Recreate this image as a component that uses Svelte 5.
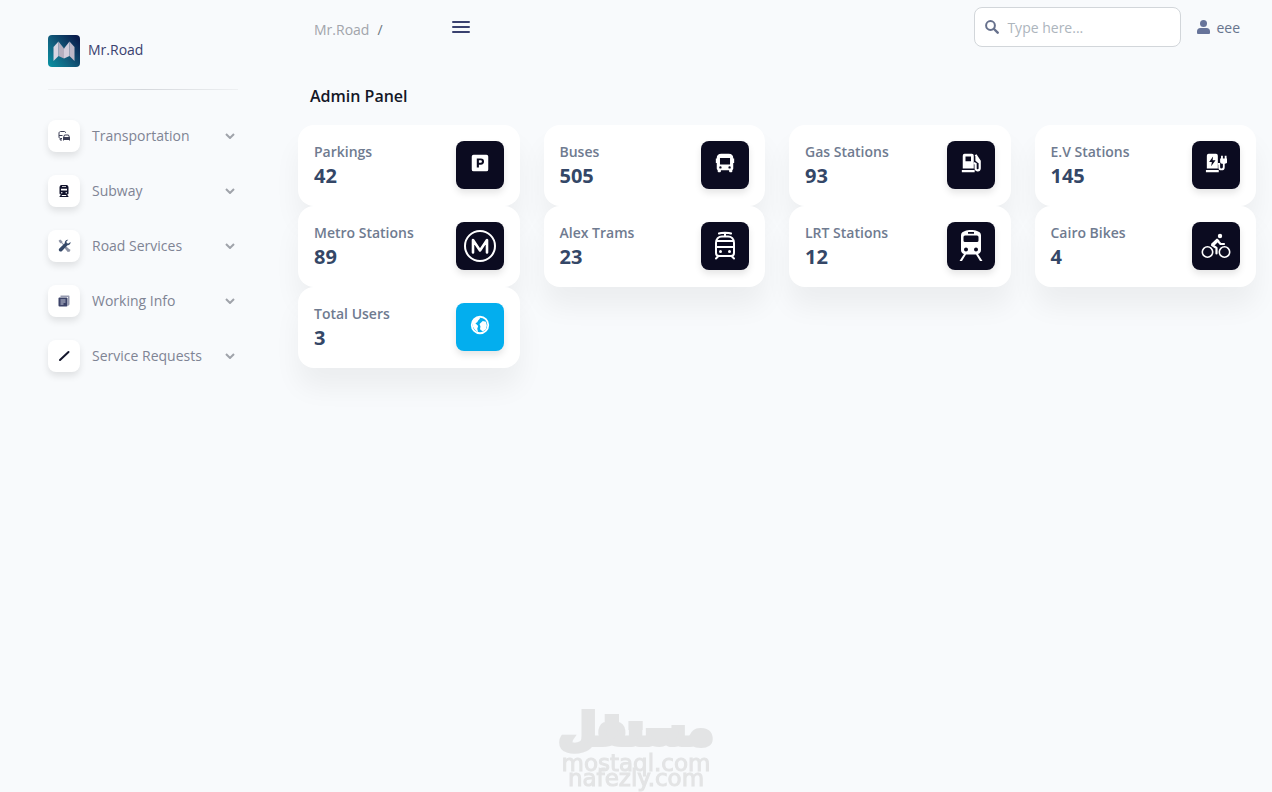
<script lang="ts">
  type Stat = { label: string; value: number; icon: string; accent?: boolean };

  const nav = [
    { label: 'Transportation', icon: 'commute' },
    { label: 'Subway', icon: 'subway' },
    { label: 'Road Services', icon: 'tools' },
    { label: 'Working Info', icon: 'news' },
    { label: 'Service Requests', icon: 'pen' }
  ];

  const stats: Stat[] = [
    { label: 'Parkings', value: 42, icon: 'parking' },
    { label: 'Buses', value: 505, icon: 'bus' },
    { label: 'Gas Stations', value: 93, icon: 'gas' },
    { label: 'E.V Stations', value: 145, icon: 'ev' },
    { label: 'Metro Stations', value: 89, icon: 'metro' },
    { label: 'Alex Trams', value: 23, icon: 'tram' },
    { label: 'LRT Stations', value: 12, icon: 'lrt' },
    { label: 'Cairo Bikes', value: 4, icon: 'bike' },
    { label: 'Total Users', value: 3, icon: 'globe', accent: true }
  ];

  // these fill the tile, the rest are drawn as small glyphs
  const large = ['metro', 'tram', 'lrt', 'bike'];

  let open = $state('');
  let query = $state('');
</script>

<div class="layout">
  <aside>
    <a class="brand" href="#home">
      <svg width="32" height="32" viewBox="0 0 32 32" aria-hidden="true">
        <defs>
          <linearGradient id="logo" x1="0" y1="1" x2="1" y2="0.2">
            <stop offset="0" stop-color="#0894a4" />
            <stop offset="0.45" stop-color="#12607f" />
            <stop offset="1" stop-color="#0a1d4c" />
          </linearGradient>
        </defs>
        <rect width="32" height="32" rx="4" fill="url(#logo)" />
        <path fill="#d8d5e2" d="M5.500 12l5-5.500v14.500l-5 5z" />
        <path fill="#b5afbf" d="M10.500 6.500l5.500 7v10l-5.500-2.500z" />
        <path fill="#d2cddb" d="M16 13.500l5.500-7v14.500L16 23.500z" />
        <path fill="#bdb7c7" d="M21.500 6.500l5 5.500v14l-5-5z" />
      </svg>
      <span>Mr.Road</span>
    </a>
    <hr />
    <nav aria-label="Main">
      {#each nav as item (item.label)}
        <button
          class="nav-item"
          aria-expanded={open === item.label}
          onclick={() => (open = open === item.label ? '' : item.label)}
        >
          <span class="nav-icon">
            {#if item.icon === 'commute'}
              <svg width="12" height="12" viewBox="0 0 24 24" fill="none" stroke="#3a3d55" stroke-width="2">
                <path d="M15 6V5c0-1-1-2-2-2H5C3.500 3 2 4.500 2 6v8c0 1.500 1 3 3 3h3M2 11h7M5 17l-1 3h4" />
                <path fill="#3a3d55" d="M11 15h12v4H11z" />
                <path d="M11 15l2-5h8l2 5v6M11 15v6" />
              </svg>
            {:else if item.icon === 'subway'}
              <svg width="12" height="12" viewBox="0 0 24 24" fill="#10122b">
                <path
                  fill-rule="evenodd"
                  d="M7 0h10c3 0 4 3 4 5v11c0 2-1 3-3 3l3 4v1H3v-1l3-4c-2 0-3-1-3-3V5c0-2 1-5 4-5zm1 2.500V4h8V2.500zM6 7.500V11h12V7.500zM7.500 14a1.500 1.500 0 1 0 0 3 1.500 1.500 0 0 0 0-3zm9 0a1.500 1.500 0 1 0 0 3 1.500 1.500 0 0 0 0-3zM8 20l-1 2h10l-1-2z"
                />
              </svg>
            {:else if item.icon === 'tools'}
              <svg width="13" height="13" viewBox="0 0 24 24">
                <path fill="#8d93a5" d="M1 3l3-2 4 3v3l12 11 3 2-1 3-4 1-5-6v-2L7 8H4z" />
                <path
                  fill="#344767"
                  d="M23 5.500c.8 3-1.800 6.500-5.500 6L7 22.500c-3 2.500-7-1.500-5-4.500L12.500 8C12 4 15 .8 19 1.500l-3.500 3.200.8 3 3.200.8z"
                />
              </svg>
            {:else if item.icon === 'news'}
              <svg width="12" height="12" viewBox="0 0 24 24">
                <path fill="#979bb0" d="M5 1h16c1.500 0 2 1 2 2v16l-3 3V4H5z" />
                <rect x="1" y="5" width="18" height="18" rx="2" fill="#3b4268" />
                <path stroke="#c9ccda" stroke-width="2" d="M5 10h10M5 14h10M5 18h6" />
              </svg>
            {:else}
              <svg width="12" height="12" viewBox="0 0 24 24" fill="none">
                <path stroke="#14162c" stroke-width="4" stroke-linecap="round" d="M4 20 21 4" />
              </svg>
            {/if}
          </span>
          <span class="nav-label">{item.label}</span>
          <svg class="chevron" width="10" height="6" viewBox="0 0 10 6" aria-hidden="true">
            <path d="M1 1l4 4 4-4" />
          </svg>
        </button>
      {/each}
    </nav>
  </aside>

  <main>
    <header>
      <div class="crumbs"><a href="#home">Mr.Road</a><span>/</span></div>
      <button class="menu" aria-label="Toggle menu">
        <svg width="18" height="12" viewBox="0 0 18 12">
          <path stroke="#3a416f" stroke-width="2" stroke-linecap="round" d="M1 1h16M1 6h16M1 11h16" />
        </svg>
      </button>
      <label class="search">
        <svg width="14" height="14" viewBox="0 0 14 14" aria-hidden="true">
          <circle cx="5.500" cy="5.500" r="4.400" fill="none" stroke="#66708c" stroke-width="2" />
          <path stroke="#66708c" stroke-width="2.400" stroke-linecap="round" d="M9 9l3.700 3.700" />
        </svg>
        <input type="text" placeholder="Type here..." aria-label="Search" bind:value={query} />
      </label>
      <a class="user" href="#account">
        <svg width="13" height="14" viewBox="0 0 13 14" fill="#67749a" aria-hidden="true">
          <circle cx="6.500" cy="3.500" r="3.500" />
          <path d="M3.500 8h6A3.500 3.500 0 0 1 13 11.500V13a1 1 0 0 1-1 1H1a1 1 0 0 1-1-1v-1.500A3.500 3.500 0 0 1 3.500 8z" />
        </svg>
        <span>eee</span>
      </a>
    </header>

    <h1>Admin Panel</h1>

    <div class="grid">
      {#each stats as stat (stat.label)}
        <section class="card">
          <div>
            <h2>{stat.label}</h2>
            <p>{stat.value}</p>
          </div>
          <div class="tile" class:accent={stat.accent} class:large={large.includes(stat.icon)}>
            {#if stat.icon === 'parking'}
              <svg viewBox="0 0 24 24">
                <path
                  fill-rule="evenodd"
                  d="M5 3h14a2 2 0 0 1 2 2v14a2 2 0 0 1-2 2H5a2 2 0 0 1-2-2V5a2 2 0 0 1 2-2zm3.500 4v10h2.300v-3.200H13a3.400 3.400 0 0 0 0-6.800zm2.300 2.100h2a1.300 1.300 0 0 1 0 2.600h-2z"
                />
              </svg>
            {:else if stat.icon === 'bus'}
              <svg viewBox="0 0 24 24">
                <path
                  fill-rule="evenodd"
                  d="M8 2h8c3.500 0 5 2 5 4.500V7h1v5h-1v6c0 .8-.4 1.300-1 1.600V21a1 1 0 0 1-1 1h-1.500a1 1 0 0 1-1-1v-1h-9v1a1 1 0 0 1-1 1H5a1 1 0 0 1-1-1v-1.400c-.6-.3-1-.8-1-1.600v-6H2V7h1v-.5C3 4 4.500 2 8 2zM6.500 6.500v7h11v-7zM7 15.500a1.300 1.300 0 1 0 0 2.600 1.300 1.300 0 0 0 0-2.600zm10 0a1.300 1.300 0 1 0 0 2.600 1.300 1.300 0 0 0 0-2.600z"
                />
              </svg>
            {:else if stat.icon === 'gas'}
              <svg viewBox="0 0 24 24">
                <path
                  fill-rule="evenodd"
                  d="M5 2h8a2 2 0 0 1 2 2v14H3V4a2 2 0 0 1 2-2zm1 3v5h6V5zM2 19.500h14V22H2z"
                />
                <path
                  fill="none"
                  stroke="currentColor"
                  stroke-width="2.400"
                  d="M15 12l2 1v4.500a2 2 0 0 0 4.500.5V10L17 3M18 5v4l3.500 3"
                />
              </svg>
            {:else if stat.icon === 'ev'}
              <svg viewBox="0 0 24 24">
                <path
                  fill-rule="evenodd"
                  d="M4 2h8a2 2 0 0 1 2 2v14H2V4a2 2 0 0 1 2-2zm4.800 3L4.500 11h3l-.8 4.500L11.500 9H8.300zM1 19.500h14V22H1z"
                />
                <path fill="none" stroke="currentColor" stroke-width="2" d="M14 13h1.500v3.500a2.500 2.500 0 0 0 5 0V11" />
                <path d="M17.500 4h2v3h2V4h2v3h1v3.500c0 1.500-1.500 2.500-4 2.500s-4-1-4-2.500V7h1z" />
              </svg>
            {:else if stat.icon === 'metro'}
              <svg viewBox="0 0 32 32" fill="none" stroke="currentColor">
                <circle cx="16" cy="16" r="15" stroke-width="2" />
                <path stroke-width="2.600" stroke-linejoin="round" stroke-linecap="round" d="M9 22.500V10l7 10.500L23 10v12.500" />
              </svg>
            {:else if stat.icon === 'tram'}
              <svg viewBox="0 0 32 32" fill="none" stroke="currentColor" stroke-width="2" stroke-linecap="round">
                <path d="M10 3.500c2-1 10-1 12 0M16 3v3M7 23V13c0-4 2.500-6.500 6-6.500h6c3.500 0 6 2.500 6 6.500v10a3 3 0 0 1-3 3H10a3 3 0 0 1-3-3zM7.500 11h17M7 17h18M9 26.500l-2 2M23 26.500l2 2" />
                <circle cx="11.500" cy="21.500" r="1.500" fill="currentColor" stroke="none" />
                <circle cx="20.500" cy="21.500" r="1.500" fill="currentColor" stroke="none" />
              </svg>
            {:else if stat.icon === 'lrt'}
              <svg viewBox="0 0 32 32">
                <path
                  fill-rule="evenodd"
                  d="M10 1c3-1.300 9-1.300 12 0 2.500.8 4 2 4 4.500V20c0 2-1.200 3.500-3 4l4.500 7H25l-4-6.500H11L7 31H4.500L9 24c-1.800-.5-3-2-3-4V5.500C6 3 7.500 1.800 10 1zm3 1v1.800h6V2zM10 5.500A1.500 1.500 0 0 0 8.500 7v3.500A1.500 1.500 0 0 0 10 12h12a1.500 1.500 0 0 0 1.500-1.500V7A1.500 1.500 0 0 0 22 5.500zM11 17.500a2 2 0 1 0 0 4 2 2 0 0 0 0-4zm10 0a2 2 0 1 0 0 4 2 2 0 0 0 0-4z"
                />
              </svg>
            {:else if stat.icon === 'bike'}
              <svg viewBox="0 0 32 32" fill="none" stroke="currentColor">
                <circle cx="7.500" cy="22" r="5.200" stroke-width="1.600" />
                <circle cx="24.500" cy="22" r="5.200" stroke-width="1.600" />
                <circle cx="20" cy="6" r="2.200" fill="currentColor" stroke="none" />
                <path
                  stroke-width="2.200"
                  stroke-linejoin="round"
                  stroke-linecap="round"
                  d="M16.500 23.500v-5.500L12 15l5-5 3.500 4H24"
                />
                <path fill="currentColor" stroke="none" d="M11 14l6-5.500 2.500 2-5 5z" />
              </svg>
            {:else}
              <svg viewBox="0 0 24 24">
                <circle cx="12" cy="12" r="9" fill="none" stroke="currentColor" stroke-width="2" />
                <path d="M4 8c2-3 4-4 7-5l1 2-2 2-1 2-2 1 3 3-1 3 1 4c-3-2-6-5-6-8z" />
                <path d="M15 7.500l3.500 1 1 4-1 4-3.500 2.500-3-2.500.5-3-1-2.500z" />
              </svg>
            {/if}
          </div>
        </section>
      {/each}
    </div>
  </main>
</div>

<div class="watermark">
  <span class="arabic" lang="ar" dir="rtl">مستقل</span>
  <span>mostaql.com</span>
  <span>nafezly.com</span>
</div>

<style>
  :global(body) {
    background: #f8fafc;
    font-family: 'Open Sans', 'Noto Sans', sans-serif;
    font-size: 14px;
    line-height: 21px;
    color: #67748e;
  }

  button,
  input {
    font: inherit;
    color: inherit;
    border: 0;
    padding: 0;
    background: none;
  }

  a {
    color: inherit;
    text-decoration: none;
  }

  svg {
    display: block;
    flex: none;
  }

  .layout {
    display: flex;
    min-height: 100vh;
  }

  aside {
    flex: none;
    box-sizing: border-box;
    width: 274px;
    padding: 35px 36px 0 48px;
  }

  .brand {
    display: flex;
    align-items: center;
    gap: 8px;
    font-weight: 500;
    color: #3a416f;
  }

  .brand span {
    padding-bottom: 4px;
  }

  hr {
    height: 1px;
    margin: 22px 0 18px;
    border: 0;
    background: linear-gradient(90deg, #eef0f2, #d5d8dc, #eef0f2);
  }

  .nav-item {
    display: flex;
    align-items: center;
    width: 100%;
    height: 55px;
    padding-right: 3px;
    text-align: left;
    color: #7f8494;
    cursor: pointer;
  }

  .nav-icon {
    display: grid;
    place-items: center;
    width: 32px;
    height: 32px;
    margin-right: 12px;
    border-radius: 8px;
    background: #fff;
    box-shadow: 0 4px 7px rgba(0, 0, 0, 0.1);
  }

  .nav-label {
    flex: 1;
  }

  .chevron path {
    fill: none;
    stroke: #a0a3aa;
    stroke-width: 2;
  }

  main {
    flex: 1;
    padding: 0 16px 0 24px;
  }

  header {
    display: flex;
    align-items: center;
    height: 54px;
    padding: 0 16px;
  }

  .crumbs {
    display: flex;
    gap: 8px;
    padding-top: 4px;
    color: #6c757d;
  }

  .crumbs a {
    color: #a2a5ab;
  }

  .menu {
    margin-left: 69px;
    cursor: pointer;
  }

  .search {
    display: flex;
    align-items: center;
    gap: 8px;
    box-sizing: border-box;
    width: 207px;
    height: 40px;
    margin-left: auto;
    padding: 0 10px;
    border: 1px solid #d2d6da;
    border-radius: 8px;
    background: #fff;
  }

  .search input {
    flex: 1;
    min-width: 0;
    outline: none;
  }

  .search input::placeholder {
    color: #adb5bd;
    opacity: 1;
  }

  .user {
    display: flex;
    align-items: center;
    gap: 6px;
    margin-left: 16px;
    font-weight: 500;
  }

  h1 {
    margin: 30px 12px 17px;
    font-size: 16px;
    line-height: 24px;
    font-weight: 600;
    color: #141727;
  }

  .grid {
    display: grid;
    grid-template-columns: repeat(4, 1fr);
    column-gap: 24px;
  }

  .card {
    display: flex;
    justify-content: space-between;
    padding: 16px;
    border-radius: 16px;
    background: #fff;
    box-shadow: 0 20px 27px rgba(0, 0, 0, 0.05);
  }

  h2,
  p {
    margin: 0;
  }

  h2 {
    font-size: 14px;
    line-height: 21px;
    font-weight: 600;
    color: #6f7b90;
  }

  p {
    font-size: 20px;
    line-height: 28px;
    font-weight: 700;
    color: #344767;
  }

  .tile {
    display: grid;
    place-items: center;
    box-sizing: border-box;
    width: 48px;
    height: 48px;
    padding-bottom: 4px;
    border-radius: 8px;
    background: #0b0b20;
    color: #fff;
    box-shadow: 0 4px 7px rgba(0, 0, 0, 0.1);
  }

  .tile svg {
    width: 22px;
    height: 22px;
    fill: currentColor;
  }

  .tile.accent {
    background: #03aeee;
  }

  .tile.large {
    padding: 0;
  }

  .tile.large svg {
    width: 32px;
    height: 32px;
  }

  .tile.large svg[fill='none'] {
    fill: none;
  }

  .watermark {
    position: fixed;
    bottom: 6px;
    left: 0;
    right: 0;
    display: flex;
    flex-direction: column;
    align-items: center;
    font-family: 'DejaVu Sans', sans-serif;
    font-size: 23px;
    line-height: 15px;
    color: #e3e4e5;
    -webkit-text-stroke: 1px #e3e4e5;
    pointer-events: none;
  }

  .arabic {
    font-size: 42px;
    line-height: 52px;
    font-weight: 700;
    -webkit-text-stroke: 6px #e3e4e5;
  }
</style>
